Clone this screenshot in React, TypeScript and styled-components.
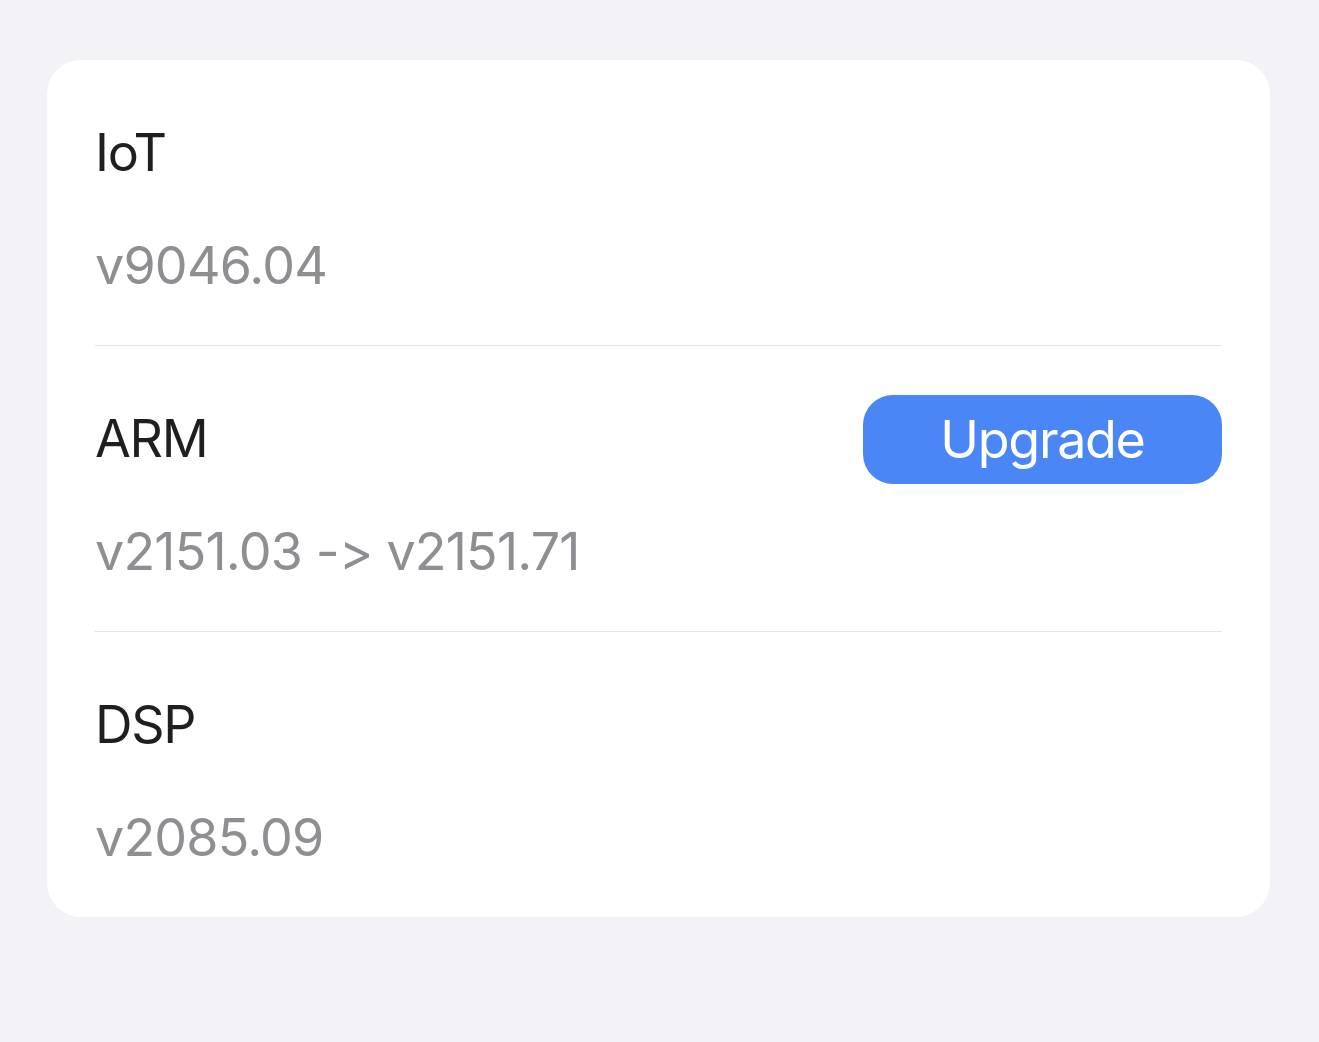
import React from "react";
import styled, { createGlobalStyle } from "styled-components";

const GlobalStyle = createGlobalStyle`
  html, body {
    margin: 0;
    padding: 0;
    background: #f2f2f7;
  }
  body {
    font-family: Inter, "Noto Sans", "Liberation Sans", sans-serif;
    -webkit-font-smoothing: antialiased;
  }
`;

const Page = styled.div`
  min-height: 1042px;
  padding: 60px 49px 0 47px;
  box-sizing: border-box;
`;

const Card = styled.div`
  background: #ffffff;
  border-radius: 34px;
  padding: 0 48px;
  display: flex;
  flex-direction: column;
`;

const Row = styled.div<{ $last?: boolean }>`
  padding: 62px 0 48px;
  display: flex;
  flex-direction: column;
  gap: 51px;
  border-bottom: ${(p) => (p.$last ? "none" : "1px solid #e4e4e8")};
`;

const Header = styled.div`
  height: 62px;
  display: flex;
  align-items: center;
  justify-content: space-between;
`;

const Title = styled.div`
  font-size: 52px;
  line-height: 62px;
  color: #1f1f21;
  letter-spacing: -1.3px;
`;

const Version = styled.div`
  font-size: 52px;
  line-height: 62px;
  color: #8e8e93;
  letter-spacing: -0.8px;
`;

const UpgradeButton = styled.button`
  width: 359px;
  height: 89px;
  flex: none;
  border: none;
  border-radius: 30px;
  background: #4a86f6;
  color: #ffffff;
  font-family: inherit;
  font-size: 52px;
  letter-spacing: -1.3px;
  padding: 0;
  cursor: pointer;
`;

type Item = { name: string; version: string; upgrade?: boolean };

const items: Item[] = [
  { name: "IoT", version: "v9046.04" },
  { name: "ARM", version: "v2151.03 -> v2151.71", upgrade: true },
  { name: "DSP", version: "v2085.09" },
];

export default function App() {
  return (
    <>
      <GlobalStyle />
      <Page>
        <Card>
          {items.map((it, i) => (
            <Row key={it.name} $last={i === items.length - 1}>
              <Header>
                <Title>{it.name}</Title>
                {it.upgrade && <UpgradeButton>Upgrade</UpgradeButton>}
              </Header>
              <Version>{it.version}</Version>
            </Row>
          ))}
        </Card>
      </Page>
    </>
  );
}
